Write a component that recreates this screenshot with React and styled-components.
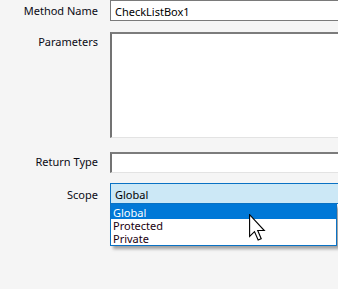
import React from "react";
import styled, { createGlobalStyle } from "styled-components";

const Global = createGlobalStyle`
  html, body { margin: 0; padding: 0; background: #f5f5f5; overflow: hidden; }
  body { font-family: "Noto Sans", "Open Sans", sans-serif; font-size: 11px; color: #000; }
`;

const Page = styled.div`
  width: 338px;
  height: 289px;
  overflow: hidden;
  position: relative;
`;

const Form = styled.div`
  display: flex;
  flex-direction: column;
`;

const Row = styled.div`
  display: grid;
  grid-template-columns: 98px 250px;
  column-gap: 12px;
  margin-top: ${(p) => p.$mt || 0}px;
  position: relative;
`;

const Label = styled.div`
  text-align: right;
  line-height: 14px;
  padding-top: ${(p) => p.$top || 3}px;
  color: #0a0a14;
`;

const TextBox = styled.div`
  box-sizing: border-box;
  height: 21px;
  background: #fff;
  border: 1px solid #7a7a7a;
  border-right: none;
  padding: 3px 4px 0;
  line-height: 15px;
`;

const InsetBox = styled.div`
  box-sizing: border-box;
  height: ${(p) => p.$h}px;
  background: #fff;
  border-top: 2px solid #7c7c7c;
  border-left: 2px solid #737373;
  border-bottom: 1px solid #e3e3e3;
`;

const ComboWrap = styled.div`
  position: relative;
`;

const Combo = styled.div`
  box-sizing: border-box;
  height: 21px;
  width: 240px;
  background: #cce8f6;
  border: 1px solid #0a72c4;
  padding: 3px 4px 0;
  line-height: 15px;
`;

const List = styled.div`
  position: absolute;
  left: 0;
  top: 21px;
  width: 227px;
  box-sizing: border-box;
  background: #fff;
  border: 1px solid #0a72c4;
  border-top: none;
  box-shadow: 3px 3px 3px rgba(0, 0, 0, 0.35);
  z-index: 2;
`;

const Item = styled.div`
  height: ${(p) => (p.$selected ? 15 : 13)}px;
  box-sizing: border-box;
  padding-top: ${(p) => (p.$selected ? 2 : 0)}px;
  line-height: 13px;
  padding-left: 2px;
  background: ${(p) => (p.$selected ? "#0078d7" : "transparent")};
  color: ${(p) => (p.$selected ? "#fff" : "#1a0010")};
`;

const Cursor = styled.svg`
  position: absolute;
  left: 248px;
  top: 214px;
  z-index: 3;
`;

export default function App() {
  return (
    <Page>
      <Global />
      <Form>
        <Row>
          <Label $top={4}>Method Name</Label>
          <TextBox>CheckListBox1</TextBox>
        </Row>
        <Row $mt={11}>
          <Label $top={3}>Parameters</Label>
          <InsetBox $h={106} />
        </Row>
        <Row $mt={14}>
          <Label $top={3}>Return Type</Label>
          <InsetBox $h={21} />
        </Row>
        <Row $mt={10}>
          <Label $top={5}>Scope</Label>
          <ComboWrap>
            <Combo>Global</Combo>
            <List>
              <Item $selected>Global</Item>
              <Item>Protected</Item>
              <Item>Private</Item>
            </List>
          </ComboWrap>
        </Row>
      </Form>
      <Cursor width="20" height="28" viewBox="0 0 13 20">
        <path
          d="M0.5 0.5 L0.5 16 L4 12.6 L6.6 18.6 L8.8 17.7 L6.3 11.8 L11 11.8 Z"
          fill="#fff"
          stroke="#000"
          strokeWidth="0.8"
          strokeLinejoin="miter"
        />
      </Cursor>
    </Page>
  );
}
